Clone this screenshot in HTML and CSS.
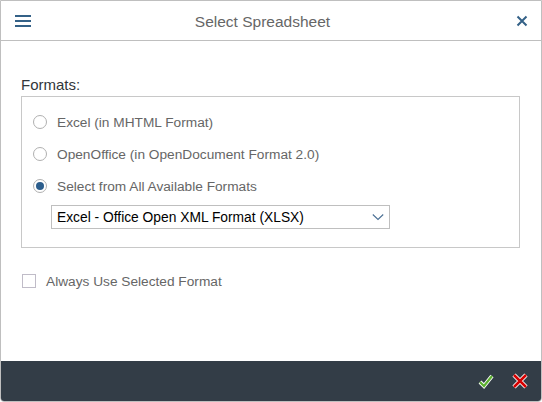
FILE: index.html
```html
<!DOCTYPE html>
<html>
<head>
<meta charset="utf-8">
<link rel="stylesheet" href="styles.css">
</head>
<body>
<div class="dialog">
  <div class="header">
    <span class="hamburger"><span></span><span></span><span></span></span>
    <div class="title">Select Spreadsheet</div>
    <svg class="close" width="12" height="12" viewBox="0 0 12 12"><path d="M1.5 1.5 L10.5 10.5 M10.5 1.5 L1.5 10.5" stroke="#346187" stroke-width="2" fill="none"/></svg>
  </div>
  <div class="content">
    <div class="label">Formats:</div>
    <div class="box">
      <div class="row"><span class="radio"></span><span class="opt">Excel (in MHTML Format)</span></div>
      <div class="row"><span class="radio"></span><span class="opt">OpenOffice (in OpenDocument Format 2.0)</span></div>
      <div class="row"><span class="radio checked"></span><span class="opt">Select from All Available Formats</span></div>
      <div class="select">
        <span class="sel-text">Excel - Office Open XML Format (XLSX)</span>
        <svg class="chev" width="12" height="8" viewBox="0 0 12 8"><path d="M0.8 1.5 L6 6.5 L11.2 1.5" stroke="#4a6f94" stroke-width="1.1" fill="none"/></svg>
      </div>
    </div>
    <div class="check-row"><span class="checkbox"></span><span class="opt">Always Use Selected Format</span></div>
  </div>
  <div class="footer">
    <svg class="ficon" width="18" height="16" viewBox="0 0 18 16"><path d="M3 9 L7 13 L15 3" stroke="#ffffff" stroke-width="4" fill="none"/><path d="M3 9 L7 13 L15 3" stroke="#5cb030" stroke-width="2.2" fill="none"/></svg>
    <svg class="ficon" width="18" height="16" viewBox="0 0 18 16"><path d="M3 2 L15 14 M15 2 L3 14" stroke="#ffffff" stroke-width="4.4" fill="none"/><path d="M3 2 L15 14 M15 2 L3 14" stroke="#d40000" stroke-width="2.6" fill="none"/></svg>
  </div>
</div>
</body>
</html>
```
FILE: styles.css
```css
* { box-sizing: border-box; }
html, body { margin: 0; padding: 0; background: #ffffff; }
body { font-family: "Liberation Sans", Arial, sans-serif; }
.dialog {
  width: 542px;
  height: 402px;
  border: 1px solid #bfbfbf;
  border-radius: 0 0 4px 4px;
  display: flex;
  flex-direction: column;
  overflow: hidden;
  background: #fff;
}
.header {
  height: 40px;
  flex: none;
  border-bottom: 1px solid #bfbfbf;
  display: flex;
  align-items: center;
  padding: 0 13px 0 14px;
}
.hamburger {
  width: 16px;
  display: flex;
  flex-direction: column;
  gap: 3px;
}
.hamburger span {
  display: block;
  height: 2px;
  background: #346187;
}
.title {
  flex: 1;
  text-align: center;
  font-size: 15.5px;
  color: #666666;
  padding-top: 2px;
  padding-right: 22px;
}
.close { display: block; margin-top: 1px; }
.content {
  flex: 1;
  padding: 35px 21px 0 20px;
}
.label {
  font-size: 15px;
  color: #32363a;
  line-height: 18px;
  margin-bottom: 2px;
}
.box {
  border: 1px solid #c8c8c8;
  padding: 9px 10px 18px 11px;
}
.row {
  height: 32px;
  display: flex;
  align-items: center;
}
.radio {
  width: 14px;
  height: 14px;
  border: 1px solid #b0b0b0;
  border-radius: 50%;
  margin-right: 10px;
  position: relative;
  flex: none;
}
.radio.checked::after {
  content: "";
  position: absolute;
  left: 2px;
  top: 2px;
  width: 8px;
  height: 8px;
  border-radius: 50%;
  background: #2b5d8c;
}
.opt {
  font-size: 13.7px;
  color: #666666;
}
.select {
  margin: 3px 0 0 18px;
  width: 339px;
  height: 24px;
  border: 1px solid #bfbfbf;
  display: flex;
  align-items: center;
  padding: 0 5px 0 5px;
}
.sel-text {
  flex: 1;
  font-size: 13.8px;
  color: #000000;
}
.chev { display: block; }
.check-row {
  margin-top: 25px;
  margin-left: 1px;
  display: flex;
  align-items: center;
  height: 16px;
}
.checkbox {
  width: 14px;
  height: 14px;
  border: 1px solid #c0bcc8;
  margin-right: 10px;
  flex: none;
}
.footer {
  height: 40px;
  flex: none;
  background: #333d47;
  display: flex;
  align-items: center;
  justify-content: flex-end;
  gap: 16px;
  padding-right: 12px;
}
.ficon { display: block; }
```
